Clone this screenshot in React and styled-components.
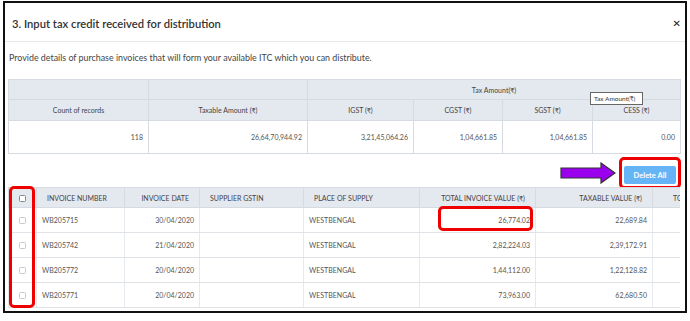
import React from 'react';
import styled, { createGlobalStyle } from 'styled-components';

const GlobalStyle = createGlobalStyle`
  body {
    margin: 0;
    background: #fff;
    font-family: 'Lato', 'Noto Sans', sans-serif;
  }
`

const Screen = styled.div`
  width: 690px;
  height: 321px;
  box-sizing: border-box;
  padding: 1px 3px 0 3px;
`

const Modal = styled.div`
  width: 684px;
  height: 312px;
  box-sizing: border-box;
  border: 2px solid #111;
  background: #fff;
  overflow: hidden;
  display: flex;
  flex-direction: column;
`

const Header = styled.div`
  display: flex;
  align-items: center;
  justify-content: space-between;
  height: 39px;
  flex-shrink: 0;
  box-sizing: border-box;
  padding: 2px 4px 0 7px;
  border-bottom: 1px solid #e8e8e8;
`

const Title = styled.h4`
  margin: 0;
  font-size: 11.2px;
  font-weight: 600;
  color: #333;
`

const Close = styled.span`
  font-family: 'DejaVu Sans', sans-serif;
  font-size: 10px;
  font-weight: 700;
  color: #222;
`

const Description = styled.p`
  margin: 0;
  height: 37px;
  flex-shrink: 0;
  box-sizing: border-box;
  padding: 10px 0 0 4px;
  line-height: 12px;
  font-size: 8.9px;
  color: #444;
`

const Area = styled.div`
  position: relative;
  margin-left: 3px;
  width: 672px;
  flex-shrink: 0;
`

const Clip = styled.div`
  overflow: hidden;
  width: 672px;
`

const Table = styled.table`
  border-collapse: collapse;
  table-layout: fixed;
  width: ${props => props.width}px;
  font-size: 7px;
`

const Th = styled.th`
  height: ${props => props.h || 19}px;
  padding: 0 ${props => props.pad ?? 10}px;
  background: #e4e8ef;
  border: 1px solid #d6dbe2;
  color: #444;
  font-weight: 400;
  text-align: ${props => props.align || 'left'};
  white-space: nowrap;
  overflow: hidden;
`

const Td = styled.td`
  height: ${props => props.h || 24}px;
  padding: 0 5px;
  border-bottom: 1px solid #dfe3e8;
  border-left: 1px solid #e6e9ee;
  color: #555;
  text-align: ${props => props.align || 'left'};
  white-space: nowrap;
  overflow: hidden;
`

const SumTd = styled(Td)`
  border: 1px solid #d6dbe2;
`

const Tooltip = styled.div`
  position: absolute;
  left: 582px;
  top: 13px;
  width: 53px;
  height: 13px;
  box-sizing: border-box;
  border: 1px solid #666;
  background: #fff;
  color: #333;
  font-size: 6.5px;
  line-height: 11px;
  padding-left: 3px;
  white-space: nowrap;
`

const ActionBar = styled.div`
  display: flex;
  justify-content: flex-end;
  align-items: center;
  gap: 3px;
  flex-shrink: 0;
  padding: 5px 4px 0 0;
  height: 33px;
  box-sizing: border-box;
`

const Marker = styled.div`
  border: 3px solid #ee0000;
  border-radius: 5px;
  padding: 2px;
`

const DeleteButton = styled.button`
  width: 52px;
  height: 18px;
  border: none;
  border-radius: 2px;
  background: #64b4f6;
  color: #fff;
  font-family: inherit;
  font-size: 7.5px;
  font-weight: 700;
  padding: 0;
`

const Highlight = styled.div`
  position: absolute;
  box-sizing: border-box;
  border: 3px solid #ee0000;
  border-radius: 5px;
  pointer-events: none;
`

const Check = styled.span`
  display: inline-block;
  width: 7px;
  height: 7px;
  box-sizing: border-box;
  border: 1px solid ${props => props.dark ? '#888' : '#c9c9c9'};
  border-radius: 1.5px;
  background: #fff;
  vertical-align: middle;
`

const rows = [
  { no: 'WB205715', date: '30/04/2020', total: '26,774.02', taxable: '22,689.84' },
  { no: 'WB205742', date: '21/04/2020', total: '2,82,224.03', taxable: '2,39,172.91' },
  { no: 'WB205772', date: '20/04/2020', total: '1,44,112.00', taxable: '1,22,128.82' },
  { no: 'WB205771', date: '20/04/2020', total: '73,963.00', taxable: '62,680.50' },
]

function Arrow() {
  return (
    <svg width="56" height="22" viewBox="0 0 56 22">
      <path d="M1 6 H41 V1 L55 11 L41 21 V16 H1 Z" fill="#9a00ee" stroke="#333" strokeWidth="1.2" strokeLinejoin="miter" />
    </svg>
  )
}

export default function App() {
  return (
    <Screen>
      <GlobalStyle />
      <Modal>
        <Header>
          <Title>3. Input tax credit received for distribution</Title>
          <Close>✕</Close>
        </Header>

        <Description>
          Provide details of purchase invoices that will form your available ITC which you can distribute.
        </Description>

        <Area>
          <Table width={672}>
            <colgroup>
              <col style={{ width: 140 }} />
              <col style={{ width: 159 }} />
              <col style={{ width: 106 }} />
              <col style={{ width: 89 }} />
              <col style={{ width: 90 }} />
              <col style={{ width: 88 }} />
            </colgroup>
            <thead>
              <tr>
                <Th />
                <Th />
                <Th colSpan={4} align="center">Tax Amount(₹)</Th>
              </tr>
              <tr>
                <Th h={20} align="center">Count of records</Th>
                <Th h={20} align="center">Taxable Amount (₹)</Th>
                <Th h={20} align="center">IGST (₹)</Th>
                <Th h={20} align="center">CGST (₹)</Th>
                <Th h={20} align="center">SGST (₹)</Th>
                <Th h={20} align="center">CESS (₹)</Th>
              </tr>
            </thead>
            <tbody>
              <tr>
                <SumTd h={32} align="right">118</SumTd>
                <SumTd h={32} align="right">26,64,70,944.92</SumTd>
                <SumTd h={32} align="right">3,21,45,064.26</SumTd>
                <SumTd h={32} align="right">1,04,661.85</SumTd>
                <SumTd h={32} align="right">1,04,661.85</SumTd>
                <SumTd h={32} align="right">0.00</SumTd>
              </tr>
            </tbody>
          </Table>
          <Tooltip>Tax Amount(₹)</Tooltip>
        </Area>

        <ActionBar>
          <Arrow />
          <Marker>
            <DeleteButton>Delete All</DeleteButton>
          </Marker>
        </ActionBar>

        <Area>
          <Clip>
            <Table width={744}>
              <colgroup>
                <col style={{ width: 28 }} />
                <col style={{ width: 88 }} />
                <col style={{ width: 75 }} />
                <col style={{ width: 104 }} />
                <col style={{ width: 116 }} />
                <col style={{ width: 116 }} />
                <col style={{ width: 117 }} />
                <col style={{ width: 100 }} />
              </colgroup>
              <thead>
                <tr>
                  <Th pad={0} align="center"><Check dark /></Th>
                  <Th>INVOICE NUMBER</Th>
                  <Th align="right">INVOICE DATE</Th>
                  <Th>SUPPLIER GSTIN</Th>
                  <Th>PLACE OF SUPPLY</Th>
                  <Th align="right">TOTAL INVOICE VALUE (₹)</Th>
                  <Th align="right">TAXABLE VALUE (₹)</Th>
                  <Th pad={20}>TOTAL TAX (₹)</Th>
                </tr>
              </thead>
              <tbody>
                {rows.map(r => (
                  <tr key={r.no}>
                    <Td align="center"><Check /></Td>
                    <Td>{r.no}</Td>
                    <Td align="right">{r.date}</Td>
                    <Td></Td>
                    <Td>WESTBENGAL</Td>
                    <Td align="right">{r.total}</Td>
                    <Td align="right">{r.taxable}</Td>
                    <Td></Td>
                  </tr>
                ))}
              </tbody>
            </Table>
          </Clip>
          <Highlight style={{ left: 1, top: -1, width: 26, height: 122 }} />
          <Highlight style={{ left: 430, top: 19, width: 95, height: 25 }} />
        </Area>
      </Modal>
    </Screen>
  )
}
